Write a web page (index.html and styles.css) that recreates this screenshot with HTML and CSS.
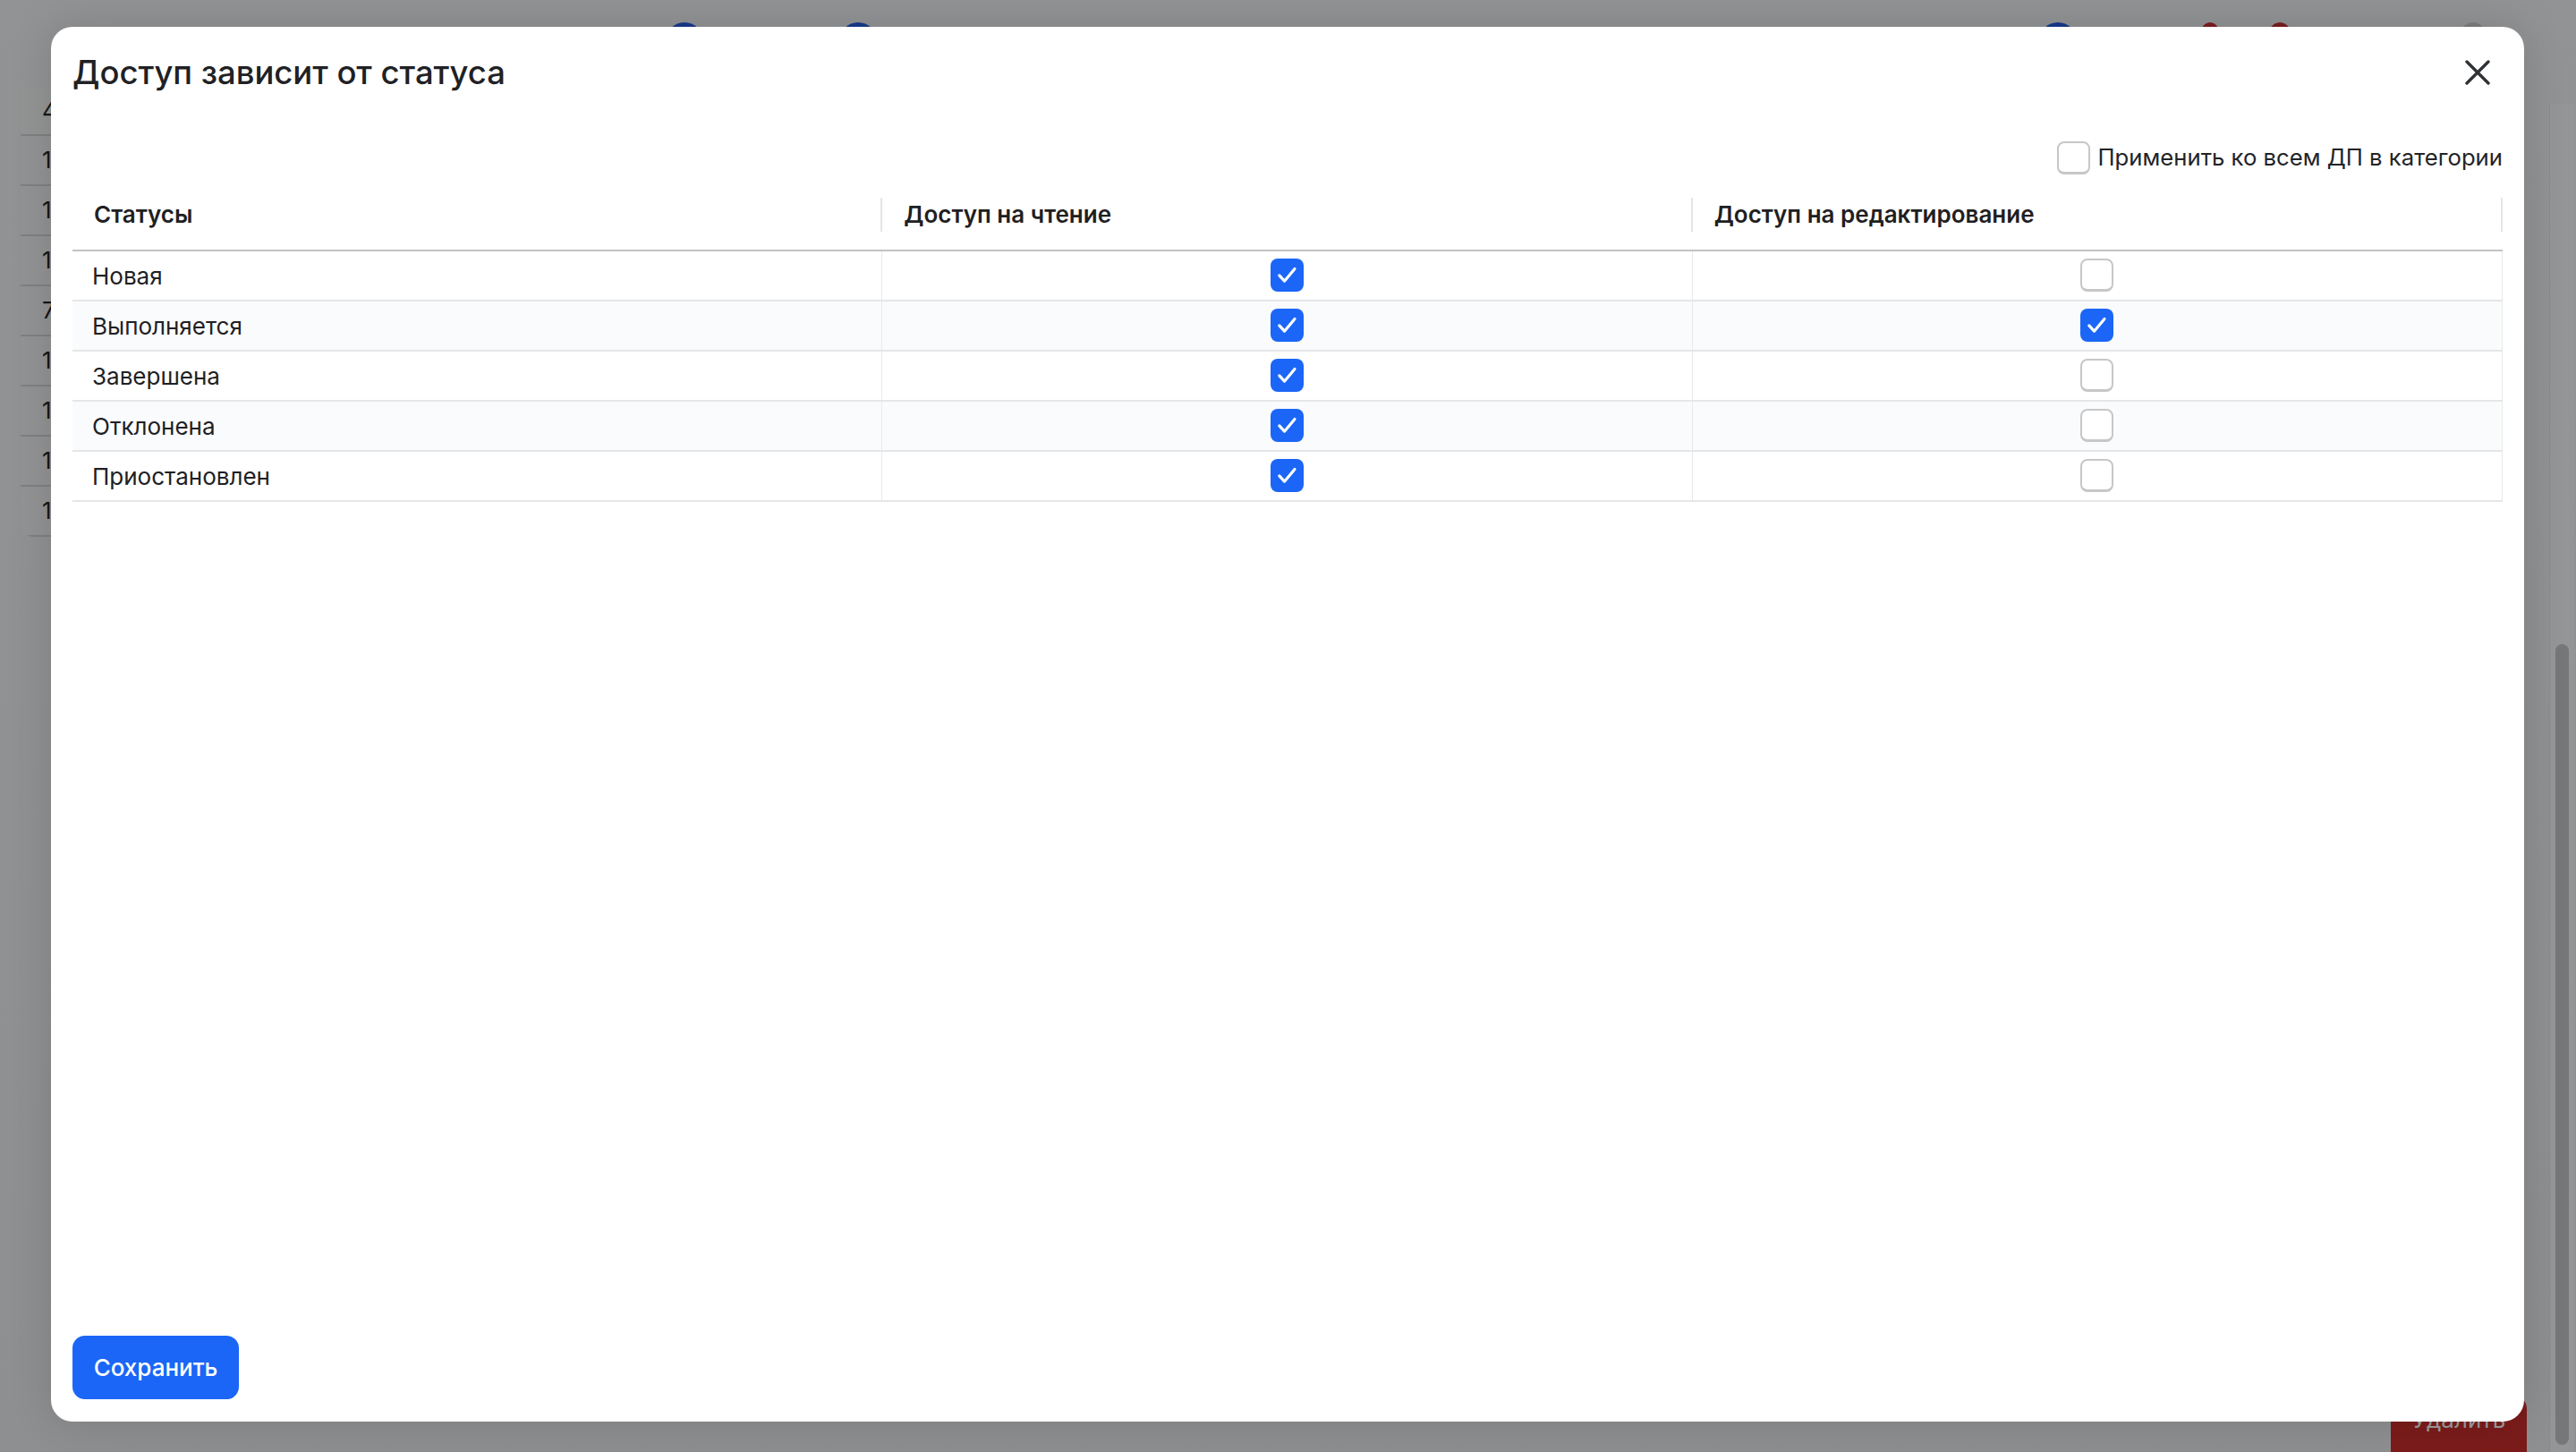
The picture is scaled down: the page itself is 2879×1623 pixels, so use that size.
FILE: index.html
```html
<!DOCTYPE html>
<html lang="ru">
<head>
<meta charset="utf-8">
<title>Доступ зависит от статуса</title>
<link rel="stylesheet" href="styles.css">
</head>
<body>
<div class="page">
  <div class="dots">
    <span class="dot blue d1"></span>
    <span class="dot blue d2"></span>
    <span class="dot blue d3"></span>
    <span class="dot red d4"></span>
    <span class="dot red d5"></span>
    <span class="dot gray d6"></span>
  </div>
  <div class="page-main">
    <div class="bg-table">
      <div class="bg-cell first">4</div>
      <div class="bg-cell">1</div>
      <div class="bg-cell">1</div>
      <div class="bg-cell">1</div>
      <div class="bg-cell">7</div>
      <div class="bg-cell">1</div>
      <div class="bg-cell">1</div>
      <div class="bg-cell">1</div>
      <div class="bg-cell">1</div>
    </div>
    <div class="bg-content">
      <div class="bg-delete">Удалить</div>
    </div>
    <div class="scroll-track"><div class="scroll-thumb"></div></div>
  </div>

  <div class="modal">
    <div class="modal-head">
      <h1 class="modal-title">Доступ зависит от статуса</h1>
      <button class="modal-close" aria-label="Закрыть">
        <svg viewBox="0 0 28 28" width="28" height="28"><path d="M2 2 L26 26 M26 2 L2 26" stroke="#2f3336" stroke-width="3.4" stroke-linecap="round" fill="none"/></svg>
      </button>
    </div>
    <div class="options">
      <label class="option">
        <span class="cb"></span>
        <span class="option-text">Применить ко всем ДП в категории</span>
      </label>
    </div>
    <div class="table">
      <div class="thead">
        <div class="th">Статусы</div>
        <div class="th">Доступ на чтение</div>
        <div class="th">Доступ на редактирование</div>
      </div>
      <div class="tr">
        <div class="td name">Новая</div>
        <div class="td chk"><span class="cb on"><svg viewBox="0 0 20 20"><path d="M5.3 10.2 L8.4 13.6 L14.6 6.2" /></svg></span></div>
        <div class="td chk"><span class="cb"></span></div>
      </div>
      <div class="tr alt">
        <div class="td name">Выполняется</div>
        <div class="td chk"><span class="cb on"><svg viewBox="0 0 20 20"><path d="M5.3 10.2 L8.4 13.6 L14.6 6.2" /></svg></span></div>
        <div class="td chk"><span class="cb on"><svg viewBox="0 0 20 20"><path d="M5.3 10.2 L8.4 13.6 L14.6 6.2" /></svg></span></div>
      </div>
      <div class="tr">
        <div class="td name">Завершена</div>
        <div class="td chk"><span class="cb on"><svg viewBox="0 0 20 20"><path d="M5.3 10.2 L8.4 13.6 L14.6 6.2" /></svg></span></div>
        <div class="td chk"><span class="cb"></span></div>
      </div>
      <div class="tr alt">
        <div class="td name">Отклонена</div>
        <div class="td chk"><span class="cb on"><svg viewBox="0 0 20 20"><path d="M5.3 10.2 L8.4 13.6 L14.6 6.2" /></svg></span></div>
        <div class="td chk"><span class="cb"></span></div>
      </div>
      <div class="tr">
        <div class="td name">Приостановлен</div>
        <div class="td chk"><span class="cb on"><svg viewBox="0 0 20 20"><path d="M5.3 10.2 L8.4 13.6 L14.6 6.2" /></svg></span></div>
        <div class="td chk"><span class="cb"></span></div>
      </div>
    </div>
    <div class="modal-foot">
      <button class="btn-save">Сохранить</button>
    </div>
  </div>
</div>
</body>
</html>
```
FILE: styles.css
```css
* { box-sizing: border-box; }
html, body { margin: 0; padding: 0; }
body {
  font-family: Inter, "Noto Sans", "Liberation Sans", sans-serif;
  background: #8f9092;
  overflow: hidden;
}
.page {
  position: relative;
  width: 2879px;
  height: 1623px;
  display: flex;
  flex-direction: column;
  background: linear-gradient(180deg, #929395 0%, #8e8f91 100%);
  overflow: hidden;
}

/* background (under overlay) */
.dots {
  height: 30px;
  flex: none;
  display: flex;
  padding-top: 25px;
}
.dot { display: block; width: 42px; height: 42px; border-radius: 50%; }
.dot.blue { background: #183a8c; }
.dot.red { background: #7a1e1f; }
.dot.gray { background: #7d7e80; }
.d1 { margin-left: 744px; }
.d2 { margin-left: 152px; }
.d3 { margin-left: 1299px; }
.d4 { margin-left: 136px; width: 26px; }
.d5 { margin-left: 50px; width: 30px; }
.d6 { margin-left: 184px; width: 34px; }

.page-main {
  flex: 1;
  display: flex;
  min-height: 0;
}
.bg-table {
  margin-left: 23px;
  margin-top: 67px;
  width: 70px;
  align-self: flex-start;
  border-radius: 0 0 0 14px;
  overflow: hidden;
  background: #929394;
}
.bg-cell {
  height: 56px;
  border-bottom: 2px solid #7f8082;
  padding-left: 24px;
  font-size: 26px;
  line-height: 54px;
  color: #151617;
}
.bg-cell.first { height: 55px; background: #939494; }
.bg-content {
  flex: 1;
  display: flex;
  flex-direction: column;
  justify-content: flex-end;
  align-items: flex-end;
  padding-right: 25px;
}
.bg-delete {
  width: 152px;
  height: 66px;
  margin-bottom: -2px;
  background: #7b1c1b;
  border-radius: 16px 16px 0 0;
  color: #9e9c9c;
  font-size: 26px;
  text-align: center;
  line-height: 56px;
}
.scroll-track {
  width: 28px;
  margin-right: 2px;
  margin-top: 86px;
  background: #949597;
  border-left: 1px solid #8a8b8d;
  display: flex;
  flex-direction: column;
  justify-content: flex-end;
  align-items: center;
  padding-bottom: 8px;
}
.scroll-thumb {
  width: 15px;
  height: 895px;
  background: #767778;
  border-radius: 8px;
}

/* modal */
.modal {
  position: absolute;
  left: 57px;
  top: 30px;
  width: 2764px;
  height: 1559px;
  background: #ffffff;
  border-radius: 24px;
  box-shadow: 0 0 48px rgba(0, 0, 0, 0.14);
  display: flex;
  flex-direction: column;
  padding: 24px 24px 25px 24px;
  color: #1f2022;
}
.modal-head {
  display: flex;
  align-items: center;
  justify-content: space-between;
  height: 54px;
}
.modal-title {
  margin: 0;
  font-size: 36.4px;
  font-weight: 500;
  line-height: 54px;
  color: #202124;
}
.modal-close {
  border: 0;
  background: transparent;
  padding: 0;
  margin-right: 14px;
  width: 28px;
  height: 28px;
  display: flex;
  cursor: pointer;
}
.options {
  margin-top: 48px;
  height: 40px;
  display: flex;
  justify-content: flex-end;
  align-items: center;
}
.option {
  display: flex;
  align-items: center;
  gap: 9px;
}
.option-text {
  font-size: 25.7px;
  color: #232426;
  line-height: 40px;
}

.cb {
  width: 37px;
  height: 37px;
  border-radius: 8px;
  border: 2px solid #c6c7c8;
  border-bottom-width: 3px;
  background: #ffffff;
  display: inline-flex;
  align-items: center;
  justify-content: center;
  flex: none;
}
.cb.on {
  background: #1b66f6;
  border: 0;
}
.cb svg {
  width: 37px;
  height: 37px;
}
.cb svg path {
  fill: none;
  stroke: #ffffff;
  stroke-width: 1.7;
  stroke-linecap: round;
  stroke-linejoin: round;
}

.table {
  margin-top: 4px;
}
.thead {
  display: grid;
  grid-template-columns: 1fr 1fr 1fr;
  height: 81px;
  border-bottom: 2px solid #c1c2c3;
}
.th {
  display: flex;
  align-items: center;
  padding-left: 24px;
  font-size: 26px;
  font-weight: 600;
  color: #1f2022;
  position: relative;
}
.th::after {
  content: "";
  position: absolute;
  right: 0;
  top: 21px;
  width: 2px;
  height: 38px;
  background: #e4e5e6;
}
.tr {
  display: grid;
  grid-template-columns: 1fr 1fr 1fr;
  height: 56px;
  border-bottom: 2px solid #e4e6e7;
}
.tr.alt { background: #fafbfd; }
.td {
  border-right: 1px solid #e8e9ea;
  display: flex;
  align-items: center;
}
.td.name {
  padding-left: 22px;
  font-size: 26px;
  color: #202124;
}
.td.chk { justify-content: center; padding-bottom: 2px; }

.modal-foot {
  margin-top: auto;
  display: flex;
}
.btn-save {
  width: 186px;
  height: 71px;
  border: 0;
  border-radius: 14px;
  background: #1b66f6;
  color: #ffffff;
  font-family: Inter, "Noto Sans", sans-serif;
  font-size: 26px;
  font-weight: 500;
  cursor: pointer;
}
```
